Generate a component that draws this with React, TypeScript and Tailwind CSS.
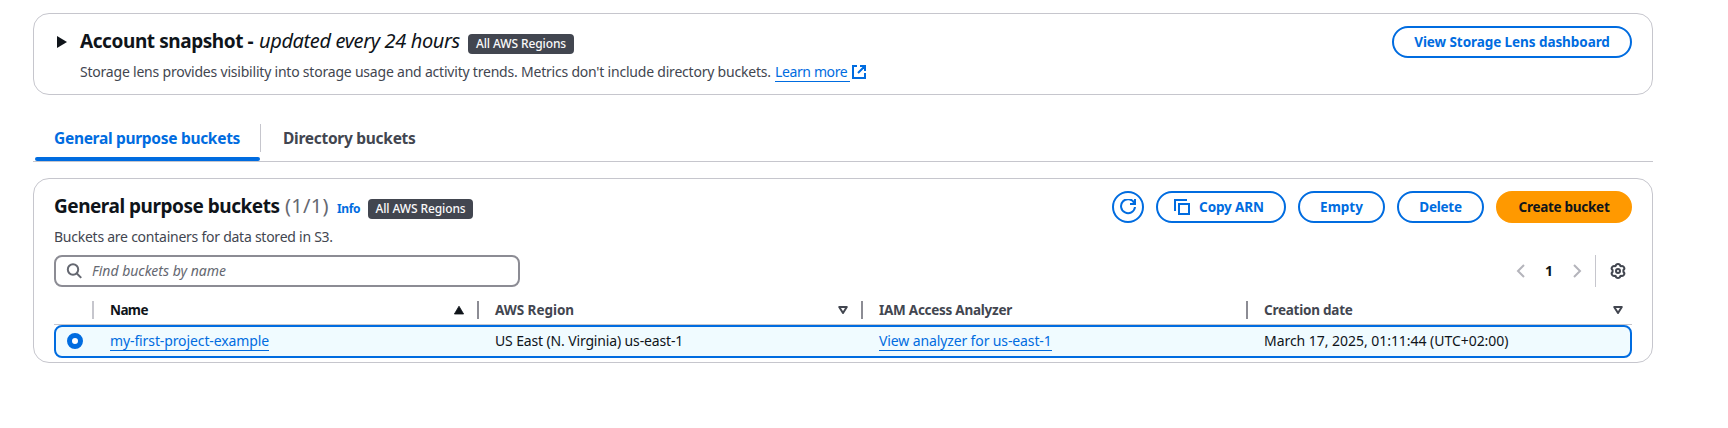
import React from "react";

const TITLE = "text-[19px] font-bold leading-6 text-[#0f141a]";

function Badge({ className }: { className: string }) {
  return (
    <span className={`flex h-5 items-center justify-center whitespace-nowrap rounded bg-[#424650] text-[12px] font-medium leading-5 tracking-[-0.11px] text-[#f9f9fa] ${className}`}>
      All AWS Regions
    </span>
  );
}

function Button({ className, children }: { className: string; children: React.ReactNode }) {
  return (
    <button className={`flex h-8 items-center justify-center whitespace-nowrap rounded-full border-2 text-[13.5px] font-bold leading-5 ${className}`}>
      {children}
    </button>
  );
}

function SortDown() {
  return (
    <svg className="size-4" viewBox="0 0 16 16" fill="none" stroke="#424650" strokeWidth="2" strokeLinejoin="round">
      <path d="M4.2 5h7.6L8 11z" />
    </svg>
  );
}

function Divider({ className = "bg-[#8c8c94]" }: { className?: string }) {
  return <span className={`h-[18px] w-0.5 shrink-0 ${className}`} />;
}

export default function App() {
  return (
    <div className="h-[428px] w-[1728px] overflow-hidden bg-white pl-[33px] pt-[13px] font-['Noto_Sans',sans-serif] text-sm leading-5 text-[#0f141a]">
      <section className="flex h-[82px] w-[1620px] justify-between rounded-2xl border border-[#c6c6cd] pl-[21px] pr-5 pt-3">
        <div className="flex">
          <svg className="mt-2 h-4 w-4" viewBox="0 0 16 16" fill="#0f141a">
            <path d="M2 2v12L12 8z" />
          </svg>
          <div className="ml-[9px] mt-[3px]">
            <div className="flex h-6 whitespace-nowrap">
              <h2 className={`${TITLE} w-[179px] tracking-[-0.42px]`}>Account snapshot -</h2>
              <em className="w-[209px] text-[20px] leading-6 tracking-[-0.38px]">updated every 24 hours</em>
              <Badge className="mt-[5px] w-[106px]" />
            </div>
            <div className="mt-[9px] flex whitespace-nowrap text-[#424650]">
              <p className="w-[695px] tracking-[-0.21px]">
                Storage lens provides visibility into storage usage and activity trends. Metrics don't include directory buckets.
              </p>
              <a className="h-[20px] w-[75px] border-b border-[#006ce0] tracking-[-0.38px] text-[#006ce0]">Learn more</a>
              <svg className="ml-px mt-0.5 size-4" viewBox="0 0 16 16" fill="none" stroke="#006ce0" strokeWidth="2">
                <path d="M9 2h5v5M7 9l7-7M14 9v5H2V2h4" />
              </svg>
            </div>
          </div>
        </div>
        <Button className="w-60 border-[#006ce0] tracking-[-0.07px] text-[#006ce0]">View Storage Lens dashboard</Button>
      </section>

      <nav className="mt-[29px] flex h-[38px] w-[1620px] whitespace-nowrap border-b border-[#c6c6cd] text-[15.5px] font-bold">
        <div className="ml-0.5 flex w-[225px] flex-col justify-between text-[#006ce0]">
          <span className="ml-[19px] mt-1 tracking-[-0.3px]">General purpose buckets</span>
          <span className="h-1 rounded-sm bg-[#006ce0]" />
        </div>
        <div className="h-7 border-l border-[#c6c6cd] pl-[22px] pt-1 tracking-[-0.28px] text-[#424650]">Directory buckets</div>
      </nav>

      <section className="mt-4 h-[185px] w-[1620px] rounded-2xl border border-[#c6c6cd] px-5 pt-3">
        <div className="flex h-[52px] justify-between">
          <div>
            <div className="mt-[3px] flex h-6 whitespace-nowrap">
              <h2 className={`${TITLE} w-[231px] tracking-[-0.48px]`}>General purpose buckets</h2>
              <span className="w-[52px] text-[20px] leading-6 tracking-[0.3px] text-[#656871]">(1/1)</span>
              <a className="mt-[5px] w-[31px] text-[12px] font-bold leading-5 tracking-[-0.4px] text-[#006ce0]">Info</a>
              <Badge className="mt-[5px] w-[105px]" />
            </div>
            <p className="mt-[9px] tracking-[-0.25px] text-[#424650]">Buckets are containers for data stored in S3.</p>
          </div>
          <div className="flex gap-3 text-[#006ce0]">
            <Button className="w-8 border-[#006ce0]">
              <svg className="size-4" viewBox="0 0 16 16" fill="none" stroke="currentColor" strokeWidth="2">
                <path d="M10 5h5V0" />
                <path d="M15 8a7 7 0 1 1-.7-4" />
              </svg>
            </Button>
            <Button className="w-[130px] gap-[9px] border-[#006ce0] pr-1 tracking-[-0.12px]">
              <svg className="size-4" viewBox="0 0 16 16" fill="none" stroke="currentColor" strokeWidth="2">
                <path d="M5 5h10v10H5z" />
                <path d="M13 1H1v11" />
              </svg>
              Copy ARN
            </Button>
            <Button className="w-[87px] border-[#006ce0]">Empty</Button>
            <Button className="w-[87px] border-[#006ce0] tracking-[-0.25px]">Delete</Button>
            <Button className="w-[136px] border-[#ff9900] bg-[#ff9900] tracking-[-0.28px] text-[#0f141a]">Create bucket</Button>
          </div>
        </div>

        <div className="mt-3 flex h-8 justify-between">
          <div className="flex w-[466px] items-center rounded-lg border-2 border-[#8c8c94] pl-2.5">
            <svg className="size-4" viewBox="0 0 16 16" fill="none" stroke="#656871" strokeWidth="2">
              <circle cx="7" cy="6.5" r="5.2" />
              <path d="M10.6 10.3l4.6 4.6" />
            </svg>
            <em className="ml-2.5 text-[#656871]">Find buckets by name</em>
          </div>
          <div className="flex items-center pr-1.5">
            <svg className="size-4" viewBox="0 0 16 16" fill="none" stroke="#b4b4bb" strokeWidth="2">
              <path d="M11 2L5 8l6 6" />
            </svg>
            <span className="w-10 text-center font-bold">1</span>
            <svg className="mr-2.5 size-4" viewBox="0 0 16 16" fill="none" stroke="#b4b4bb" strokeWidth="2">
              <path d="M5 2l6 6-6 6" />
            </svg>
            <span className="h-8 w-px bg-[#c6c6cd]" />
            <svg className="ml-[14px] size-4 overflow-visible" viewBox="0 0 16 16" fill="none" stroke="#424650" strokeWidth="2" strokeLinejoin="round">
              <path d="M5.700 2.800Q6 1 8 1t2.300 1.800l.6.4q2.100-.7 3.100 1t-.6 2.900v1.800q1.600 1.200.6 2.900t-3.100 1l-.6.4Q10 15 8 15t-2.300-1.800l-.6-.4q-2.100.7-3.100-1t.6-2.900V7.100Q1 5.900 2 4.200t3.100-1z" />
              <circle cx="8" cy="8" r="2" />
            </svg>
          </div>
        </div>

        <div className="mt-[7px] flex h-[31px] items-center whitespace-nowrap border-b border-[#c6c6cd] pt-0.5 text-[13.5px] font-bold text-[#424650]">
          <div className="flex w-10 justify-end"><Divider className="bg-[#c6c6cd]" /></div>
          <div className="flex w-[385px] items-center justify-between pl-4 tracking-[-0.6px] text-[#0f141a]">
            Name
            <span className="flex items-center gap-2.5">
              <svg className="size-4" viewBox="0 0 16 16" fill="#0f141a">
                <path d="M8 4.2L12.6 12H3.4z" stroke="#0f141a" strokeWidth="0.8" strokeLinejoin="round" />
              </svg>
              <Divider />
            </span>
          </div>
          <div className="flex w-[384px] items-center justify-between pl-4 tracking-[-0.05px]">
            AWS Region
            <span className="flex items-center gap-2.5"><SortDown /><Divider /></span>
          </div>
          <div className="flex w-[385px] items-center justify-between pl-4 tracking-[-0.26px]">
            IAM Access Analyzer
            <Divider />
          </div>
          <div className="flex w-[384px] items-center justify-between pl-4 pr-1.5 tracking-[-0.24px]">
            Creation date
            <SortDown />
          </div>
        </div>

        <div className="flex h-[33px] items-center whitespace-nowrap rounded-lg border-2 border-[#006ce0] bg-[#f0fbff] pb-px">
          <div className="w-[54px] pl-[11px]">
            <span className="block size-4 rounded-full border-[5px] border-[#006ce0] bg-white" />
          </div>
          <div className="w-[385px]">
            <a className="block h-5 w-fit border-b border-[#006ce0] tracking-[-0.11px] text-[#006ce0]">my-first-project-example</a>
          </div>
          <div className="w-[384px] tracking-[-0.14px]">US East (N. Virginia) us-east-1</div>
          <div className="w-[385px]">
            <a className="block h-5 w-fit border-b border-[#006ce0] tracking-[-0.12px] text-[#006ce0]">View analyzer for us-east-1</a>
          </div>
          <div className="tracking-[-0.04px]">March 17, 2025, 01:11:44 (UTC+02:00)</div>
        </div>
      </section>
    </div>
  );
}
